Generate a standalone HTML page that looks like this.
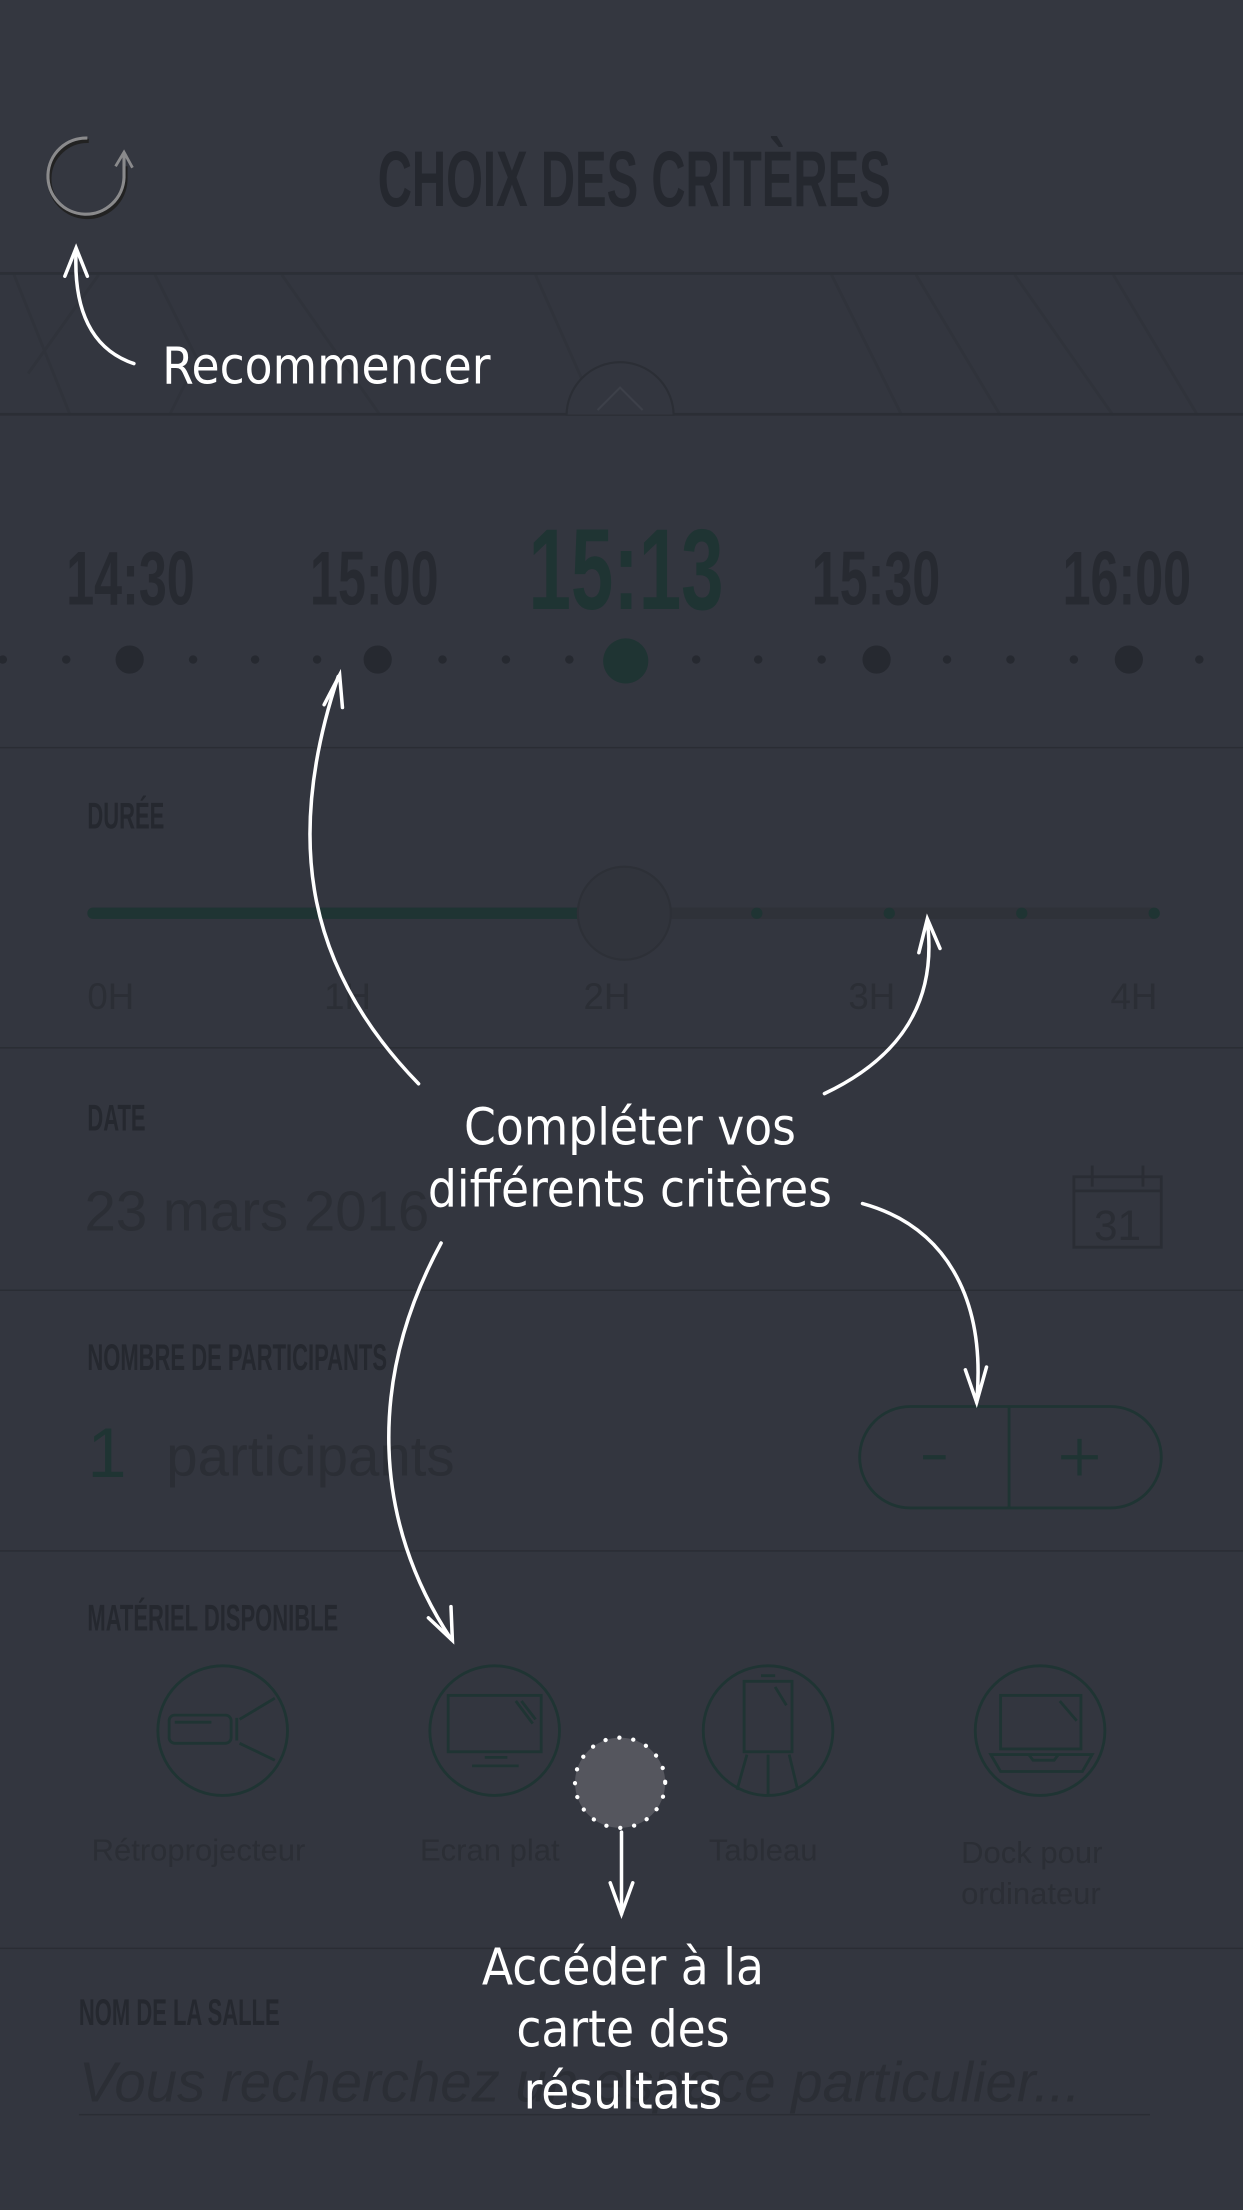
<!DOCTYPE html>
<html><head><meta charset="utf-8">
<style>
html,body{margin:0;padding:0;background:#33363f;width:1243px;height:2210px;overflow:hidden}
#w{position:absolute;left:0;top:0;width:882px;height:1568px;transform:scale(1.40930);transform-origin:0 0;background:#33363f;font-family:"Liberation Sans",sans-serif}
.a{position:absolute}
.cond{font-family:"Liberation Sans",sans-serif;font-weight:bold;transform-origin:0 0;transform:scaleX(0.7);white-space:nowrap;color:#25282f}
.lbl{font-size:26px;transform:scaleX(0.6)}
.line{position:absolute;left:0;width:882px;height:1px;background:#2a2d34}
.t{position:absolute;font-family:"DejaVu Sans Condensed","DejaVu Sans",sans-serif;color:#fff;white-space:nowrap;text-align:center}
.gr{color:#2b2e35;font-family:"Liberation Sans",sans-serif;position:absolute;white-space:nowrap}
</style></head><body><div id="w">
<div class="a" style="left:0;top:0;width:882px;height:193px;background:#343740;border-bottom:2px solid #2c2f36"></div>
<div class="a cond" style="left:268px;top:94px;font-size:56px;transform:scaleX(0.6)">CHOIX DES CRITÈRES</div>
<svg class="a" style="left:0;top:195px" width="882" height="100">
<g stroke="#30333b" stroke-width="2" fill="none">
<path d="M10 0 L50 100 M70 0 L20 70 M110 0 L140 60 L120 100 M200 0 L270 100 M380 0 L420 90 M590 0 L640 100 M650 0 L710 100 M720 0 L790 100 M790 0 L850 100"/>
</g>
<rect x="0" y="98" width="882" height="2" fill="#2b2e35"/>
<path d="M402 100 A38 38 0 0 1 478 100 Z" fill="#33363f" stroke="#2b2e35" stroke-width="1.5"/>
<path d="M424 96 L440 80 L456 96" stroke="#3d4049" stroke-width="1.5" fill="none"/>
</svg>
<svg class="a" style="left:28px;top:92px" width="72" height="70">
<path d="M34 6 A27 27 0 1 0 60 34 L60 24" stroke="#222" stroke-width="3" fill="none" transform="translate(1,2)"/>
<path d="M34 6 A27 27 0 1 0 60 34 L60 18" stroke="#8a8a8c" stroke-width="2.2" fill="none"/>
<path d="M54 26 L60 16 L66 27" stroke="#8a8a8c" stroke-width="2" fill="none"/>
</svg>
<div class="a cond" style="left:47px;top:380px;font-size:54px;color:#272a31;transform:scaleX(0.66)">14:30</div>
<div class="a cond" style="left:220px;top:380px;font-size:54px;color:#272a31;transform:scaleX(0.66)">15:00</div>
<div class="a cond" style="left:375px;top:358px;font-size:82px;color:#1f3433;transform:scaleX(0.66)">15:13</div>
<div class="a cond" style="left:576px;top:380px;font-size:54px;color:#272a31;transform:scaleX(0.66)">15:30</div>
<div class="a cond" style="left:754px;top:380px;font-size:54px;color:#272a31;transform:scaleX(0.66)">16:00</div>
<svg class="a" style="left:0;top:450px" width="882" height="40">
<g fill="#262930">
<circle cx="2" cy="18" r="3"/><circle cx="47" cy="18" r="3"/><circle cx="92" cy="18" r="10"/><circle cx="137" cy="18" r="3"/><circle cx="181" cy="18" r="3"/><circle cx="225" cy="18" r="3"/><circle cx="268" cy="18" r="10"/><circle cx="314" cy="18" r="3"/><circle cx="359" cy="18" r="3"/><circle cx="404" cy="18" r="3"/><circle cx="494" cy="18" r="3"/><circle cx="538" cy="18" r="3"/><circle cx="583" cy="18" r="3"/><circle cx="622" cy="18" r="10"/><circle cx="672" cy="18" r="3"/><circle cx="717" cy="18" r="3"/><circle cx="762" cy="18" r="3"/><circle cx="801" cy="18" r="10"/><circle cx="851" cy="18" r="3"/>
</g><circle cx="444" cy="19" r="16" fill="#1f3433"/>
</svg>
<div class="line" style="top:530px"></div>
<div class="a cond lbl" style="left:62px;top:564px">DURÉE</div>
<svg class="a" style="left:0;top:610px" width="882" height="80">
<rect x="62" y="34" width="760" height="8" rx="4" fill="#2f3239"/>
<rect x="62" y="34" width="360" height="8" rx="4" fill="#1f3433"/>
<circle cx="443" cy="38" r="33" fill="#31343c" stroke="#2d3037" stroke-width="1.5"/>
<g fill="#1f3433"><circle cx="537" cy="38" r="4"/><circle cx="631" cy="38" r="4"/><circle cx="725" cy="38" r="4"/><circle cx="819" cy="38" r="4"/></g>
</svg>
<div class="gr" style="left:62px;top:692px;font-size:26px">0H</div>
<div class="gr" style="left:230px;top:692px;font-size:26px">1H</div>
<div class="gr" style="left:414px;top:692px;font-size:26px">2H</div>
<div class="gr" style="left:602px;top:692px;font-size:26px">3H</div>
<div class="gr" style="left:788px;top:692px;font-size:26px">4H</div>
<div class="line" style="top:743px"></div>
<div class="a cond lbl" style="left:62px;top:778px">DATE</div>
<div class="gr" style="left:60px;top:838px;font-size:40px">23 mars 2016</div>
<svg class="a" style="left:755px;top:822px" width="75" height="70">
<g stroke="#2a2d34" stroke-width="2" fill="none"><rect x="7" y="13" width="62" height="50"/><path d="M7 23 H69 M20 5 V20 M56 5 V20"/></g>
<text x="38" y="58" text-anchor="middle" font-family="Liberation Sans" font-size="30" fill="#2a2d34">31</text>
</svg>
<div class="line" style="top:915px"></div>
<div class="a cond lbl" style="left:62px;top:948px">NOMBRE DE PARTICIPANTS</div>
<div class="gr" style="left:62px;top:1002px;font-size:50px;color:#1f3433">1</div>
<div class="gr" style="left:118px;top:1012px;font-size:40px">participants</div>
<svg class="a" style="left:605px;top:993px" width="225" height="82">
<rect x="5" y="5" width="214" height="72" rx="36" fill="none" stroke="#1f3433" stroke-width="2"/>
<path d="M111 5 V77" stroke="#1f3433" stroke-width="2"/>
<path d="M50 41 H66 M148 41 H174 M161 28 V54" stroke="#1f3433" stroke-width="3"/>
</svg>
<div class="line" style="top:1100px"></div>
<div class="a cond lbl" style="left:62px;top:1133px">MATÉRIEL DISPONIBLE</div>
<svg class="a" style="left:0;top:1175px" width="882" height="110">
<g stroke="#1f3433" stroke-width="2" fill="none">
<circle cx="158" cy="53" r="46"/><circle cx="351" cy="53" r="46"/><circle cx="545" cy="53" r="46"/><circle cx="738" cy="53" r="46"/>
<rect x="120" y="42" width="44" height="20" rx="4"/><path d="M124 47 H150 M170 45 L195 30 M170 62 L195 74 M168 44 V60"/>
<rect x="318" y="28" width="66" height="40"/><path d="M335 78 H368 M344 72 H360 M370 32 L380 45 M366 32 L378 48"/>
<rect x="528" y="18" width="34" height="50"/><path d="M540 14 H550 M530 70 L523 95 M545 70 V98 M560 70 L566 95 M550 22 L558 35"/>
<rect x="710" y="28" width="57" height="38"/><path d="M703 70 H775 L768 82 H710 Z M730 70 L733 74 H748 L751 70 M752 32 L764 46"/>
</g></svg>
<div class="gr" style="left:65px;top:1300px;font-size:22px">Rétroprojecteur</div>
<div class="gr" style="left:298px;top:1300px;font-size:22px">Ecran plat</div>
<div class="gr" style="left:503px;top:1300px;font-size:22px">Tableau</div>
<div class="gr" style="left:682px;top:1300px;font-size:22px;line-height:29px">Dock pour<br>ordinateur</div>
<div class="line" style="top:1382px"></div>
<div class="a cond lbl" style="left:56px;top:1413px">NOM DE LA SALLE</div>
<div class="gr" style="left:56px;top:1456px;font-size:40px;font-style:italic;color:#2b2e35">Vous recherchez un espace particulier...</div>
<div class="a" style="left:56px;top:1500px;width:760px;height:1px;background:#2a2d34"></div>
<svg class="a" style="left:0;top:0" width="882" height="1568">
<circle cx="440" cy="1265" r="32" fill="#55565e" stroke="#fff" stroke-width="3" stroke-dasharray="0.1 9.9" stroke-linecap="round"/>
<g stroke="#fff" stroke-width="2.5" fill="none" stroke-linecap="round">
<path d="M95 258 C65 248 52 220 54 178"/><path d="M46 196 L54 176 L62 196"/>
<path d="M297 769 C220 690 200 600 240 480"/><path d="M230 500 L241 479 L243 502"/>
<path d="M585 776 C640 750 665 710 658 654"/><path d="M652 676 L658 652 L667 673"/>
<path d="M612 854 C670 870 700 920 693 995"/><path d="M685 972 L693 995 L700 970"/>
<path d="M313 882 C260 980 265 1080 320 1163"/><path d="M304 1148 L321 1164 L320 1140"/>
<path d="M441 1300 V1358"/><path d="M433 1336 L441 1358 L449 1336"/>
</g></svg>
<div class="t" style="left:115px;top:240px;font-size:36px">Recommencer</div>
<div class="t" style="left:247px;top:779px;width:400px;font-size:36px;line-height:44px">Compléter vos<br>différents critères</div>
<div class="t" style="left:292px;top:1375px;width:300px;font-size:36px;line-height:44px">Accéder à la<br>carte des<br>résultats</div>
</div></body></html>
